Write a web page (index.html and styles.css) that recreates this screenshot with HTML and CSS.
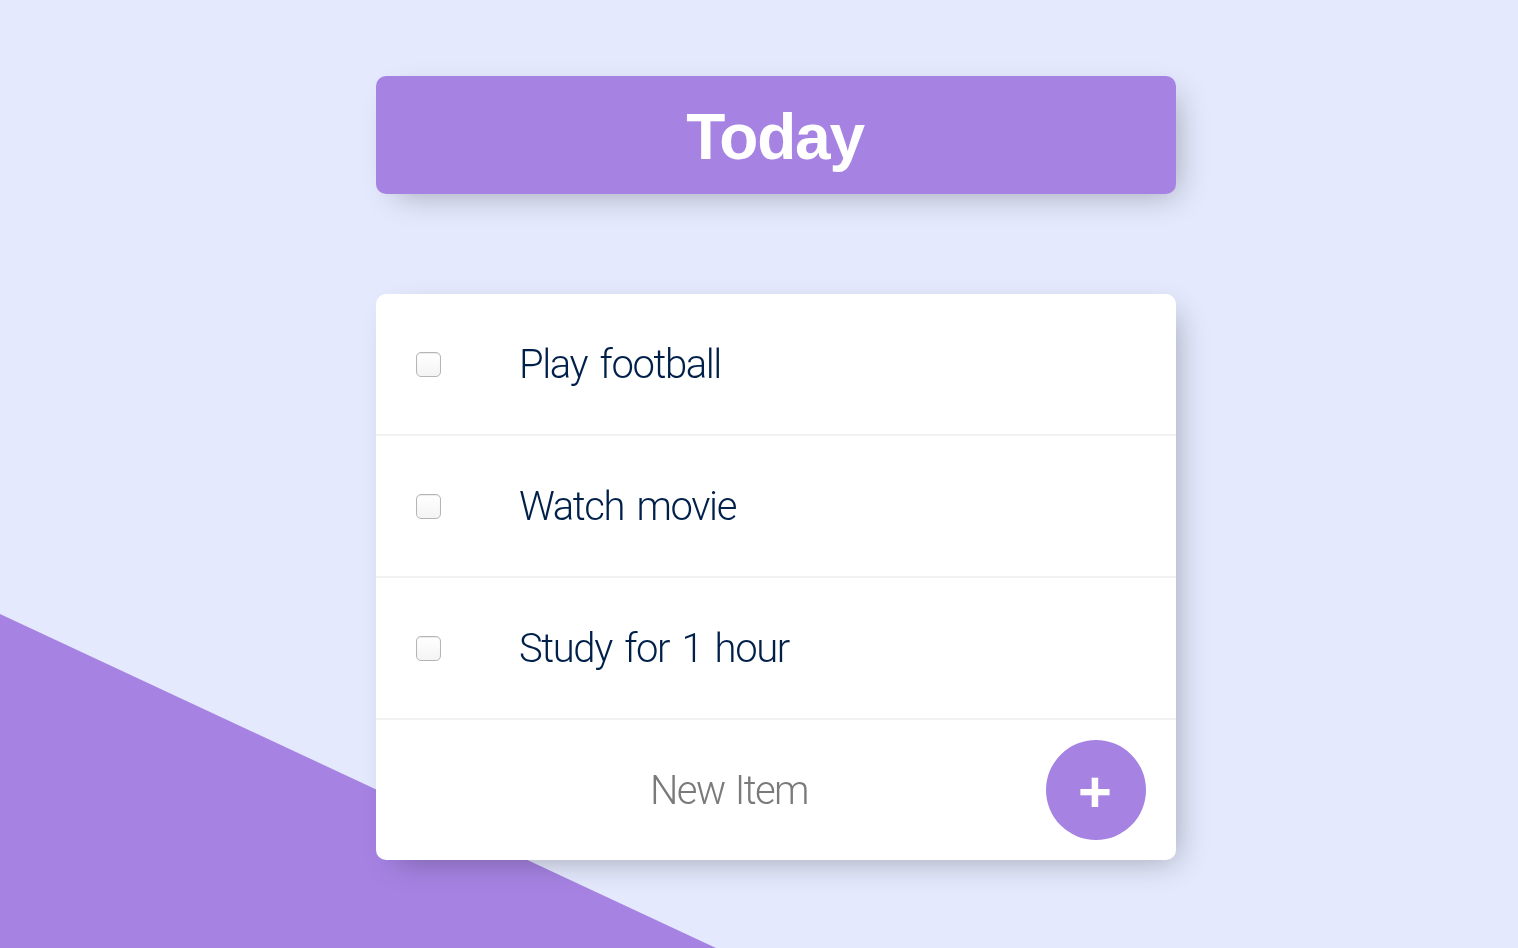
FILE: index.html
```html
<!DOCTYPE html>
<html lang="en">
<head>
<meta charset="utf-8">
<title>To-Do List</title>
<link rel="stylesheet" href="styles.css">
</head>
<body>
  <div class="box heading">
    <h1 class="title">Today</h1>
  </div>
  <div class="box list">
    <div class="item">
      <input class="check" type="checkbox">
      <p class="label">Play football</p>
    </div>
    <div class="item">
      <input class="check" type="checkbox">
      <p class="label">Watch movie</p>
    </div>
    <div class="item">
      <input class="check" type="checkbox">
      <p class="label">Study for 1 hour</p>
    </div>
    <form class="item new-form" onsubmit="return false">
      <input class="new-input" type="text" name="newItem" placeholder="New Item" autocomplete="off">
      <button class="add-btn" type="submit">+</button>
    </form>
  </div>
</body>
</html>
```

FILE: styles.css
```css
html {
  background: #E4E9FD;
  height: 100%;
  overflow: hidden;
}

body {
  margin: 0;
  min-height: 100%;
  font-family: "Liberation Sans", Arial, sans-serif;
  padding: 76px 0 0 34px;
  box-sizing: border-box;
}

body::before {
  content: "";
  position: fixed;
  inset: 0;
  background: #A683E3;
  clip-path: polygon(0 614px, 716px 948px, 0 948px);
  z-index: -1;
}

.box {
  width: 800px;
  margin: 0 auto;
  background: #fff;
  border-radius: 10px;
  box-shadow: 10px 10px 30px -10px rgba(0, 0, 0, 0.3);
}

.heading {
  background: #A683E3;
  height: 118px;
  display: flex;
  align-items: center;
  justify-content: center;
  margin-bottom: 100px;
}

.title {
  margin: 0;
  color: #fff;
  font-size: 64px;
  font-weight: 700;
  letter-spacing: -1.2px;
  line-height: 1;
  position: relative;
  top: 2px;
  left: -1px;
}

.list {
  overflow: hidden;
}

.item {
  height: 140px;
  display: flex;
  align-items: center;
  border-bottom: 2px solid #F1F1F1;
}

.item:last-child {
  border-bottom: 0;
}

.check {
  appearance: none;
  -webkit-appearance: none;
  width: 25px;
  height: 25px;
  margin: 0 40px;
  border: 1px solid #b5b5b5;
  border-radius: 5px;
  background: linear-gradient(#ffffff, #f4f4f4);
  box-shadow: inset 0 1px 1px rgba(0, 0, 0, 0.08);
  flex: none;
}

.label {
  margin: 0;
  padding: 0 40px 0 38px;
  font-family: Roboto, "Liberation Sans", sans-serif;
  font-size: 40px;
  font-weight: 300;
  color: #00204a;
  letter-spacing: -1.4px;
  word-spacing: 4px;
}

.new-form {
  margin: 0;
  padding-left: 40px;
  gap: 4px;
}

.new-input {
  width: 626px;
  height: 120px;
  border: none;
  outline: none;
  padding: 0;
  text-align: center;
  font-family: Roboto, "Liberation Sans", sans-serif;
  font-size: 40px;
  font-weight: 300;
  letter-spacing: -1.6px;
  word-spacing: 2px;
  color: #00204a;
  background: transparent;
}

.new-input::placeholder {
  color: #7a7a7a;
}

.add-btn {
  width: 100px;
  height: 100px;
  border: 0;
  border-radius: 50%;
  background: #A683E3;
  color: #fff;
  font-family: "Liberation Sans", Arial, sans-serif;
  font-size: 58px;
  font-weight: 700;
  line-height: 1;
  padding: 3px 2px 0 0;
  display: flex;
  align-items: center;
  justify-content: center;
  flex: none;
}
```
